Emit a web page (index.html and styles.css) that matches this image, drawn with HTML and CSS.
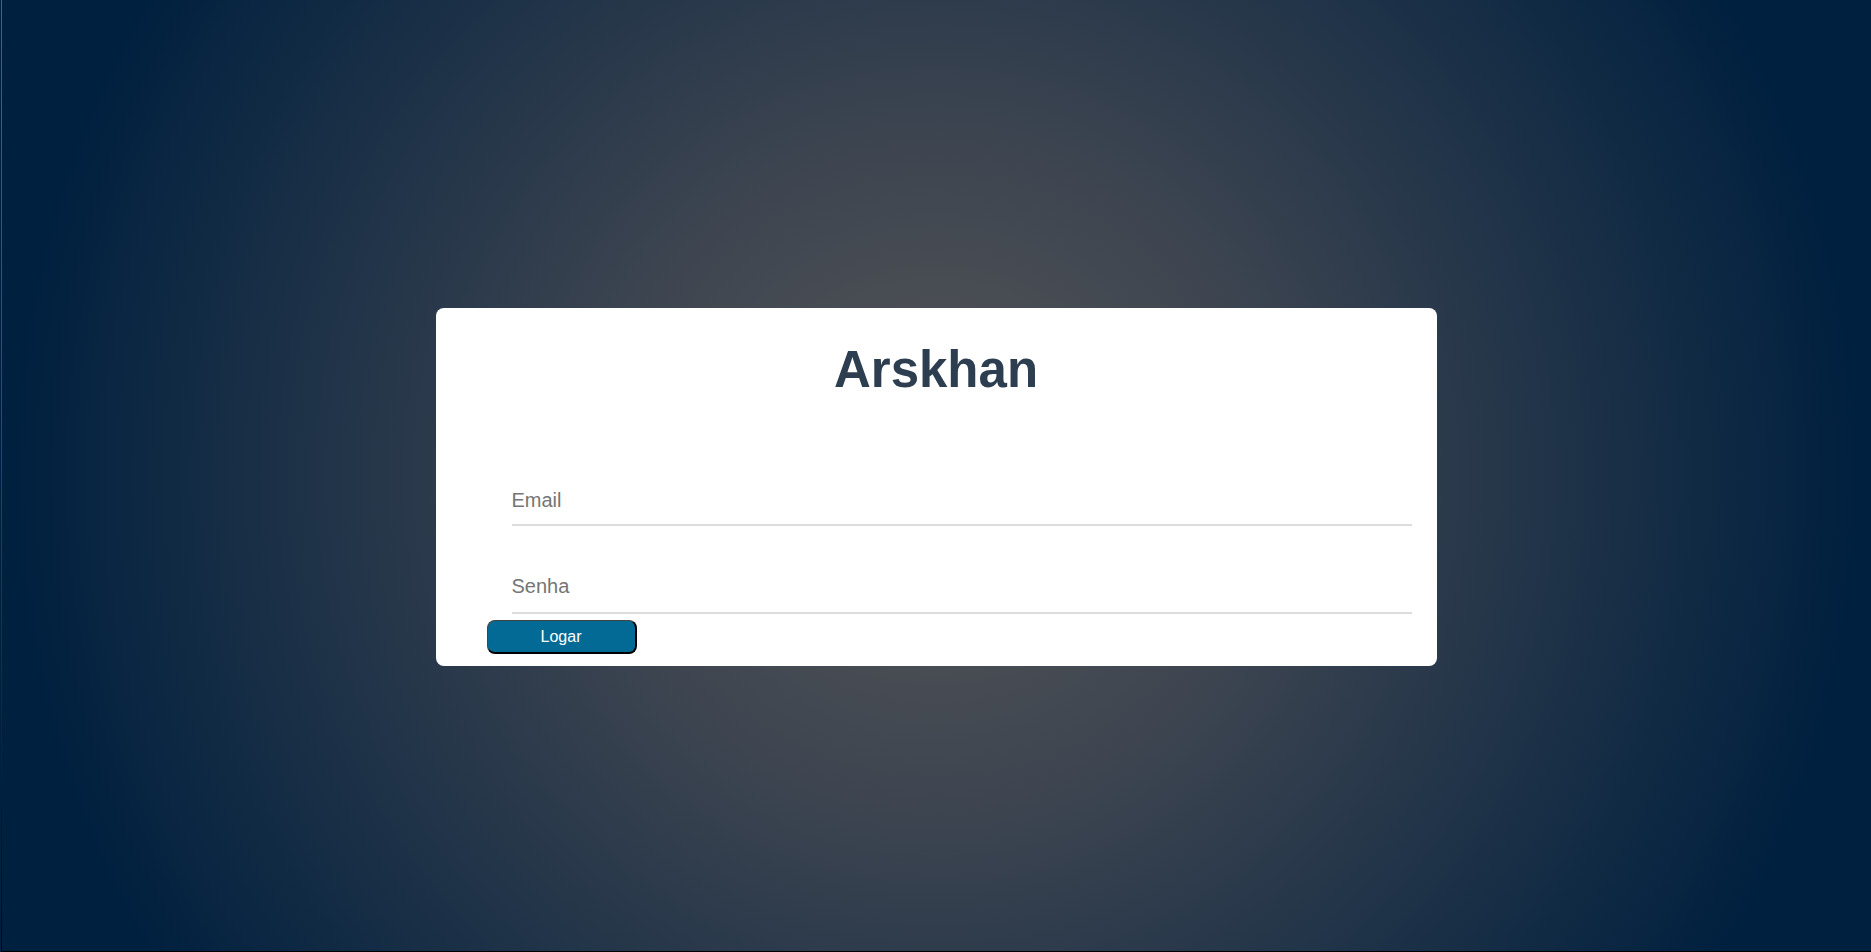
FILE: index.html
```html
<!DOCTYPE html>
<html lang="pt">
<head>
<meta charset="utf-8">
<title>Arskhan</title>
<link rel="stylesheet" href="styles.css">
</head>
<body>
<main class="page">
  <section class="card">
    <h1 class="title">Arskhan</h1>
    <form class="form">
      <input class="field" type="email" placeholder="Email">
      <input class="field field-last" type="password" placeholder="Senha">
      <button class="btn" type="button">Logar</button>
    </form>
  </section>
</main>
</body>
</html>
```

FILE: styles.css
```css
html, body {
  margin: 0;
  padding: 0;
  height: 100%;
  background: #00203f;
}

body {
  font-family: "Liberation Sans", Arial, sans-serif;
}

.page {
  box-sizing: border-box;
  height: 952px;
  margin-left: 1px;
  border-bottom: 1px solid #000;
  background:
    linear-gradient(#e0203c, #a01830 45%, #100408 100%) left top / 1px 100% no-repeat,
    radial-gradient(circle farthest-corner at 50% 50%, #575757 0%, #3c4450 33%, #00203f 88%);
  display: flex;
  justify-content: center;
  align-items: flex-start;
  padding-top: 308px;
}

.card {
  width: 1001px;
  background: #fff;
  border-radius: 8px;
  padding: 32px 0 12px;
  box-sizing: border-box;
}

.title {
  margin: 0;
  text-align: center;
  font-size: 51px;
  line-height: 59px;
  font-weight: bold;
  color: #2c3e50;
}

.form {
  margin-top: 78px;
  display: flex;
  flex-direction: column;
  align-items: flex-start;
}

.field {
  display: block;
  box-sizing: border-box;
  width: 900px;
  height: 49px;
  margin-left: 76px;
  margin-bottom: 39px;
  padding: 12px 0;
  border: none;
  border-bottom: 2px solid #dcdcdc;
  outline: none;
  font-family: "Liberation Sans", Arial, sans-serif;
  font-size: 20px;
  color: #333;
  background: transparent;
}

.field::placeholder {
  color: #757575;
}

.field-last {
  margin-bottom: 6px;
  padding: 10px 0 14px;
}

.btn {
  margin-left: 51px;
  width: 150px;
  height: 34px;
  box-sizing: border-box;
  background: #026a94;
  color: #fff;
  border: 1px solid #000;
  border-top-color: #444;
  border-left-color: #444;
  border-bottom-width: 2px;
  border-right-width: 2px;
  border-radius: 8px;
  font-family: "Liberation Sans", Arial, sans-serif;
  font-size: 16px;
  padding: 0;
  cursor: pointer;
}
```
